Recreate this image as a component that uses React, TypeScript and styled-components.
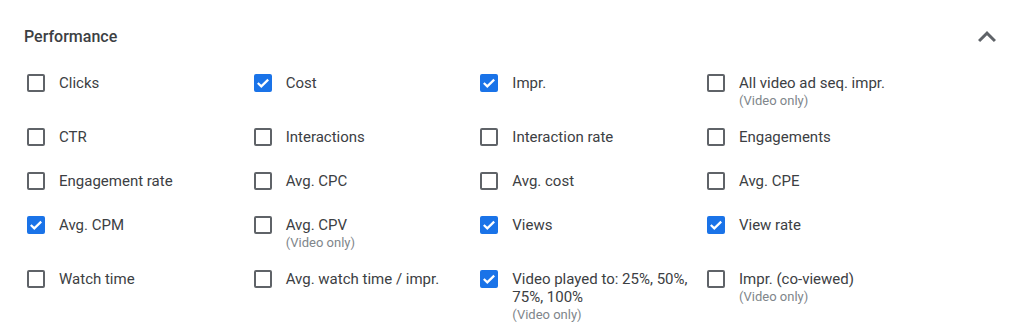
import React from "react";
import styled, { createGlobalStyle } from "styled-components";

const GlobalStyle = createGlobalStyle`
  body {
    margin: 0;
    background: #ffffff;
    font-family: Roboto, "Liberation Sans", Arial, sans-serif;
  }
`;

type Metric = {
  label: string;
  checked?: boolean;
  videoOnly?: boolean;
};

const metrics: Metric[] = [
  { label: "Clicks" },
  { label: "Cost", checked: true },
  { label: "Impr.", checked: true },
  { label: "All video ad seq. impr.", videoOnly: true },
  { label: "CTR" },
  { label: "Interactions" },
  { label: "Interaction rate" },
  { label: "Engagements" },
  { label: "Engagement rate" },
  { label: "Avg. CPC" },
  { label: "Avg. cost" },
  { label: "Avg. CPE" },
  { label: "Avg. CPM", checked: true },
  { label: "Avg. CPV", videoOnly: true },
  { label: "Views", checked: true },
  { label: "View rate", checked: true },
  { label: "Watch time" },
  { label: "Avg. watch time / impr." },
  { label: "Video played to: 25%, 50%, 75%, 100%", checked: true, videoOnly: true },
  { label: "Impr. (co-viewed)", videoOnly: true },
];

const Section = styled.section`
  width: 1024px;
  box-sizing: border-box;
`;

const Header = styled.div`
  display: flex;
  align-items: center;
  justify-content: space-between;
  height: 36px;
  padding: 19px 19px 0 24px;
`;

const Title = styled.h2`
  margin: 0;
  font-size: 16px;
  line-height: 24px;
  font-weight: 500;
  color: #3c4043;
`;

const ToggleButton = styled.button`
  border: none;
  background: none;
  padding: 0;
  width: 36px;
  height: 36px;
  display: flex;
  cursor: pointer;
  color: #5f6368;
`;

const Grid = styled.div`
  display: grid;
  grid-template-columns: repeat(4, 226.67px);
  row-gap: 16px;
  margin-top: 16px;
  padding-left: 24px;
`;

const Item = styled.label`
  display: flex;
  align-items: flex-start;
  min-height: 28px;
  gap: 11px;
  padding-right: 10px;
  cursor: pointer;
`;

const BoxWrap = styled.span`
  flex: none;
  width: 24px;
  height: 24px;
  display: flex;
  align-items: center;
  justify-content: center;
`;

const Box = styled.span<{ $checked?: boolean }>`
  box-sizing: border-box;
  width: 18px;
  height: 18px;
  border-radius: 2px;
  border: 2px solid ${(p) => (p.$checked ? "#1a73e8" : "#5f6368")};
  background: ${(p) => (p.$checked ? "#1a73e8" : "transparent")};
  display: flex;
  align-items: center;
  justify-content: center;
`;

const Texts = styled.span`
  display: flex;
  flex-direction: column;
  padding-top: 3px;
`;

const Label = styled.span`
  font-size: 15px;
  line-height: 18px;
  color: #3c4043;
`;

const Note = styled.span`
  font-size: 13px;
  line-height: 17px;
  color: #80868b;
`;

const Check = () => (
  <svg width="14" height="14" viewBox="0 0 14 14">
    <path d="M1.8 7 L5.3 10.4 L12.2 3.6" fill="none" stroke="#fff" strokeWidth="2.2" />
  </svg>
);

const MetricItem = ({ label, checked, videoOnly }: Metric) => (
  <Item>
    <BoxWrap>
      <Box $checked={checked}>{checked && <Check />}</Box>
    </BoxWrap>
    <Texts>
      <Label>{label}</Label>
      {videoOnly && <Note>(Video only)</Note>}
    </Texts>
  </Item>
);

const App = () => (
  <>
    <GlobalStyle />
    <Section>
      <Header>
        <Title>Performance</Title>
        <ToggleButton aria-label="Collapse">
          <svg width="36" height="36" viewBox="0 0 24 24">
            <path d="M12 8l-6 6 1.41 1.41L12 10.83l4.59 4.58L18 14z" fill="currentColor" />
          </svg>
        </ToggleButton>
      </Header>
      <Grid>
        {metrics.map((m) => (
          <MetricItem key={m.label} {...m} />
        ))}
      </Grid>
    </Section>
  </>
);

export default App;
